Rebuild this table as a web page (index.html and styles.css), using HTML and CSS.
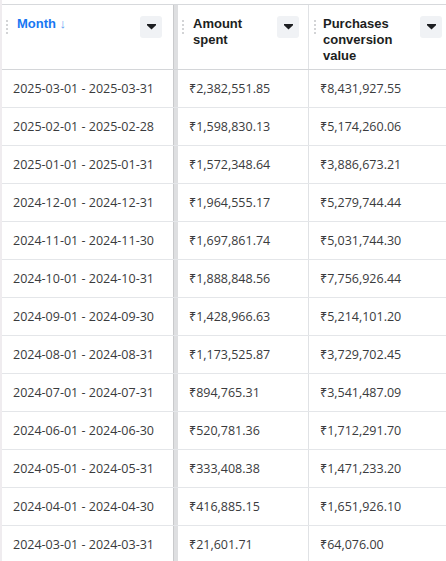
FILE: index.html
```html
<!DOCTYPE html>
<html>
<head>
<meta charset="utf-8">
<link rel="stylesheet" href="styles.css">
</head>
<body>
<div class="table">
  <div class="row head">
    <div class="cell c1">
      <span class="grip"><i></i><i></i><i></i><i></i></span>
      <span class="htext active">Month <span class="arrow">↓</span></span>
      <span class="dd"><svg width="9" height="6" viewBox="0 0 9 6"><path d="M0 0h9v1.2L4.5 5.5 0 1.2z" fill="#1c1e21"/></svg></span>
    </div>
    <div class="cell c2">
      <span class="grip"><i></i><i></i><i></i><i></i></span>
      <span class="htext">Amount<br>spent</span>
      <span class="dd"><svg width="9" height="6" viewBox="0 0 9 6"><path d="M0 0h9v1.2L4.5 5.5 0 1.2z" fill="#1c1e21"/></svg></span>
    </div>
    <div class="cell c3">
      <span class="grip"><i></i><i></i><i></i><i></i></span>
      <span class="htext">Purchases<br>conversion<br>value</span>
      <span class="dd"><svg width="9" height="6" viewBox="0 0 9 6"><path d="M0 0h9v1.2L4.5 5.5 0 1.2z" fill="#1c1e21"/></svg></span>
    </div>
  </div>
  <div class="row"><div class="cell c1">2025-03-01 - 2025-03-31</div><div class="cell c2">₹2,382,551.85</div><div class="cell c3">₹8,431,927.55</div></div>
  <div class="row"><div class="cell c1">2025-02-01 - 2025-02-28</div><div class="cell c2">₹1,598,830.13</div><div class="cell c3">₹5,174,260.06</div></div>
  <div class="row"><div class="cell c1">2025-01-01 - 2025-01-31</div><div class="cell c2">₹1,572,348.64</div><div class="cell c3">₹3,886,673.21</div></div>
  <div class="row"><div class="cell c1">2024-12-01 - 2024-12-31</div><div class="cell c2">₹1,964,555.17</div><div class="cell c3">₹5,279,744.44</div></div>
  <div class="row"><div class="cell c1">2024-11-01 - 2024-11-30</div><div class="cell c2">₹1,697,861.74</div><div class="cell c3">₹5,031,744.30</div></div>
  <div class="row"><div class="cell c1">2024-10-01 - 2024-10-31</div><div class="cell c2">₹1,888,848.56</div><div class="cell c3">₹7,756,926.44</div></div>
  <div class="row"><div class="cell c1">2024-09-01 - 2024-09-30</div><div class="cell c2">₹1,428,966.63</div><div class="cell c3">₹5,214,101.20</div></div>
  <div class="row"><div class="cell c1">2024-08-01 - 2024-08-31</div><div class="cell c2">₹1,173,525.87</div><div class="cell c3">₹3,729,702.45</div></div>
  <div class="row"><div class="cell c1">2024-07-01 - 2024-07-31</div><div class="cell c2">₹894,765.31</div><div class="cell c3">₹3,541,487.09</div></div>
  <div class="row"><div class="cell c1">2024-06-01 - 2024-06-30</div><div class="cell c2">₹520,781.36</div><div class="cell c3">₹1,712,291.70</div></div>
  <div class="row"><div class="cell c1">2024-05-01 - 2024-05-31</div><div class="cell c2">₹333,408.38</div><div class="cell c3">₹1,471,233.20</div></div>
  <div class="row"><div class="cell c1">2024-04-01 - 2024-04-30</div><div class="cell c2">₹416,885.15</div><div class="cell c3">₹1,651,926.10</div></div>
  <div class="row"><div class="cell c1">2024-03-01 - 2024-03-31</div><div class="cell c2">₹21,601.71</div><div class="cell c3">₹64,076.00</div></div>
</div>
</body>
</html>
```
FILE: styles.css
```css
html, body {
  margin: 0;
  padding: 0;
  background: #fff;
  overflow: hidden;
}
body {
  width: 446px;
  height: 561px;
  border-left: 2px solid #efecef;
  box-sizing: border-box;
  padding-top: 4px;
  font-family: "Open Sans", "Noto Sans", sans-serif;
  color: #1c1e21;
}
.table {
  border-top: 1px solid #d7d9dc;
  width: 460px;
}
.row {
  display: grid;
  grid-template-columns: 176px 131px 1fr;
  height: 38px;
  box-sizing: border-box;
  border-bottom: 1px solid #e4e6e9;
}
.row.head {
  height: 65px;
  border-bottom: 1px solid #d4d6d9;
}
.cell {
  display: flex;
  align-items: center;
  font-size: 12.5px;
  color: #3a3b3d;
  white-space: nowrap;
  box-sizing: border-box;
}
.c1 {
  padding-left: 11px;
  border-right: 4px solid #dedfe1;
  box-shadow: inset -1px 0 0 #c9cacc;
}
.c2 {
  padding-left: 11px;
  border-right: 1px solid #e0e2e5;
}
.c3 {
  padding-left: 11px;
}
.head .cell {
  align-items: flex-start;
  padding-top: 11px;
}
.head .c1 { padding-left: 4px; }
.head .c2 { padding-left: 4px; }
.head .c3 { padding-left: 5px; }
.grip {
  display: flex;
  flex-direction: column;
  gap: 2px;
  width: 2px;
  margin-top: 4px;
  margin-right: 9px;
}
.head .c3 .grip { margin-right: 7px; }
.grip i {
  display: block;
  width: 2px;
  height: 2px;
  border-radius: 1px;
  background: #c4c6c9;
}
.htext {
  font-family: "Liberation Sans", Arial, sans-serif;
  font-weight: bold;
  font-size: 13px;
  line-height: 16px;
  color: #1c1e21;
  white-space: nowrap;
}
.htext.active {
  color: #1877f2;
}
.arrow {
  color: #5b9ef2;
  font-size: 13px;
  font-weight: bold;
}
.dd {
  margin-left: auto;
  width: 22px;
  height: 22px;
  border-radius: 3px;
  background: #f0f2f5;
  display: flex;
  align-items: center;
  justify-content: center;
}
.head .c1 .dd { margin-right: 12px; }
.head .c2 .dd { margin-right: 9px; }
.head .c3 .dd { margin-right: 20px; }
```
